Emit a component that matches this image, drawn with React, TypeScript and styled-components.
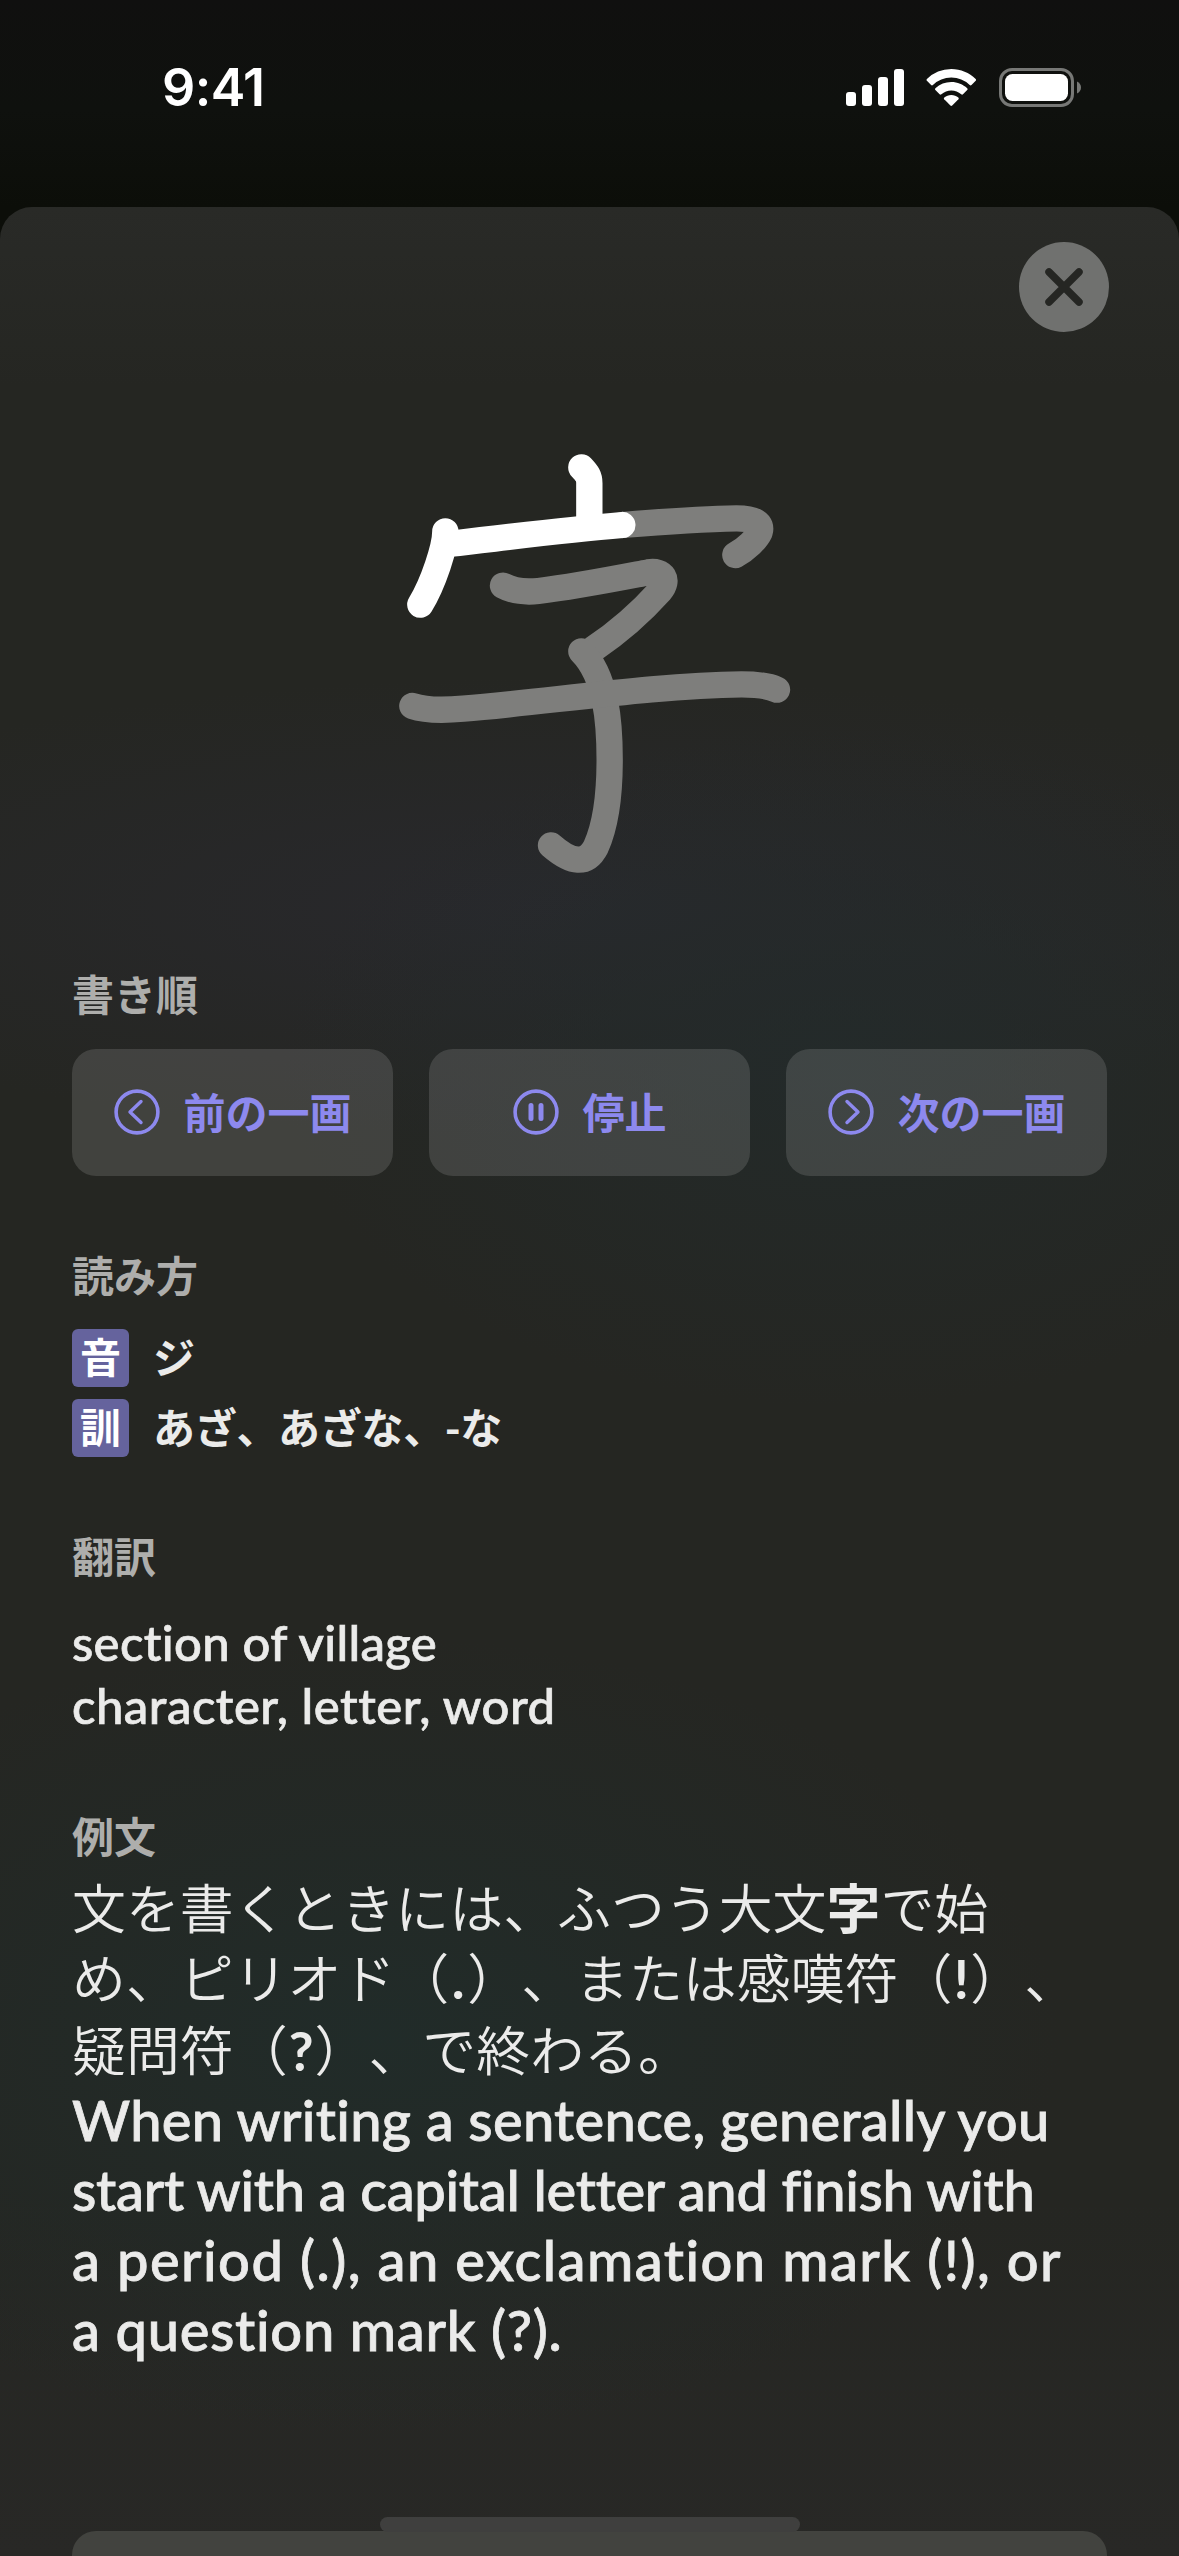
import React from "react";
import styled, { createGlobalStyle } from "styled-components";

const jp = `"Noto Sans CJK JP", sans-serif`;
const latin = `Futura, Lato, "Noto Sans CJK JP", sans-serif`;

const GlobalStyle = createGlobalStyle`
  * { box-sizing: border-box; }
  body { margin: 0; background: #0f100d; }
  h2, p { margin: 0; }
`;

const Screen = styled.div`
  width: 1179px;
  height: 2556px;
  overflow: hidden;
  display: flex;
  flex-direction: column;
  background: linear-gradient(#10100f 0, #0f110e 110px, #0c0e09 207px);
  position: relative;
  font-family: ${jp};
  text-spacing-trim: space-all;
`;

const StatusBar = styled.header`
  height: 207px;
  flex: none;
  display: flex;
  justify-content: space-between;
  align-items: flex-start;
  padding: 57px 98px 0 162px;
`;

const Time = styled.div`
  font: 600 52px/62px Inter, sans-serif;
  letter-spacing: -0.6px;
  color: #fff;
`;

const StatusIcons = styled.svg`
  display: block;
  width: 240px;
  height: 44px;
  margin-top: 9px;
`;

const Sheet = styled.main`
  flex: 1;
  min-height: 0;
  display: flex;
  flex-direction: column;
  border-radius: 32px 32px 0 0;
  padding: 35px 72px 0;
  background:
    radial-gradient(ellipse 680px 400px at 380px 1830px, rgba(32, 45, 43, 0.8), rgba(32, 45, 43, 0) 100%),
    radial-gradient(ellipse 560px 340px at 840px 860px, rgba(35, 43, 43, 0.85), rgba(35, 43, 43, 0) 100%),
    radial-gradient(ellipse 900px 230px at 560px 700px, rgba(41, 41, 46, 0.9), rgba(41, 41, 46, 0) 100%),
    linear-gradient(#292a27 0, #252622 180px, #252622 2000px, #282826 2349px);
`;

const SheetTop = styled.div`
  display: flex;
  justify-content: flex-end;
  height: 90px;
  margin-right: -2px;
`;

const CloseButton = styled.button`
  width: 90px;
  height: 90px;
  border: 0;
  padding: 0;
  border-radius: 50%;
  background: #70716f;
  svg { display: block; }
`;

const Kanji = styled.svg`
  display: block;
  width: 430px;
  height: 460px;
  margin: 98px 0 0 308px;
  flex: none;
`;

const Section = styled.section<{ $gap: number }>`
  display: flex;
  flex-direction: column;
  flex: none;
  margin-top: ${(p) => p.$gap}px;
`;

const Heading = styled.h2<{ $after: number }>`
  font: 700 42px/60px ${jp};
  color: #aeaeac;
  margin-bottom: ${(p) => p.$after}px;
`;

const ButtonRow = styled.div`
  display: grid;
  grid-template-columns: repeat(3, 1fr);
  gap: 36px;
`;

const StrokeButton = styled.button`
  height: 127px;
  border: 0;
  padding: 0 0 2px 1px;
  border-radius: 24px;
  display: flex;
  align-items: center;
  justify-content: center;
  gap: 23px;
  background: rgba(255, 255, 255, 0.13);
  color: #8d89ee;
  font: 700 42px/60px ${jp};
  svg { display: block; flex: none; }
`;

const ButtonLabel = styled.span`
  padding-bottom: 2px;
`;

const Reading = styled.div`
  display: flex;
  align-items: center;
  gap: 24px;
  height: 58px;
  & + & { margin-top: 12px; }
`;

const Tag = styled.span`
  width: 57px;
  height: 58px;
  border-radius: 6px;
  background: #65639d;
  color: #fff;
  font: 700 41px/53px ${jp};
  text-align: center;
`;

const Kana = styled.span`
  font: 700 42px/56px ${jp};
  letter-spacing: -0.3px;
  color: #ebebea;
  white-space: nowrap;
  padding-bottom: 4px;
`;

const Line = styled.span<{ $tracking: number }>`
  display: block;
  white-space: nowrap;
  letter-spacing: ${(p) => p.$tracking}px;
`;

const Translation = styled.p`
  font: 500 49px/63px ${latin};
  color: #ebebea;
  -webkit-text-stroke: 0.7px #ebebea;
`;

const Japanese = styled.p`
  font: 350 53.9px/70px ${jp};
  color: #ebebea;
  white-space: nowrap;
  b { font-weight: 700; }
`;

const Mark = styled.span<{ $w: number }>`
  display: inline-block;
  width: ${(p) => p.$w}px;
  text-align: center;
  font-family: ${latin};
  font-weight: 700;
`;

const English = styled.p`
  font: 500 56px/70px ${latin};
  color: #ebebea;
  -webkit-text-stroke: 0.8px #ebebea;
`;

const NextCard = styled.div`
  flex: none;
  height: 127px;
  border-radius: 24px;
  background: #42433f;
`;

const HomeIndicator = styled.div`
  position: absolute;
  left: 380px;
  top: 2517px;
  width: 420px;
  height: 15px;
  border-radius: 8px;
  background: #3f3f3e;
`;

const CircleIcon = ({ children }: { children: React.ReactNode }) => (
  <svg width="46" height="46" viewBox="0 0 46 46" fill="none" stroke="currentColor" strokeLinecap="round" strokeLinejoin="round">
    <circle cx="23" cy="23" r="20.9" strokeWidth="3.6" />
    {children}
  </svg>
);

const english: [string, number][] = [
  ["When writing a sentence, generally you", 0.27],
  ["start with a capital letter and finish with", -0.3],
  ["a period (.), an exclamation mark (!), or", 1.45],
  ["a question mark (?).", 0.7],
];

export default function App() {
  return (
    <Screen>
      <GlobalStyle />
      <StatusBar>
        <Time>9:41</Time>
        <StatusIcons viewBox="0 0 240 44">
          <g fill="#fff">
            <rect x="5" y="26" width="10" height="14" rx="3" />
            <rect x="21" y="19" width="10" height="21" rx="3" />
            <rect x="37" y="11" width="10" height="29" rx="3" />
            <rect x="53" y="3" width="10" height="37" rx="3" />
            <g transform="translate(-0.7 0)">
              <path d="M111 3c9.500 0 18 3.700 24.400 10 .5.500.5 1.300 0 1.800l-4.200 4.300c-.5.500-1.300.5-1.800 0A26.500 26.500 0 0 0 111 11.600a26.500 26.500 0 0 0-18.400 7.500c-.5.500-1.300.5-1.800 0l-4.200-4.300c-.5-.5-.5-1.300 0-1.800A34.800 34.800 0 0 1 111 3z" />
              <path d="M111 16c6.200 0 11.700 2.400 15.900 6.200.5.500.5 1.300 0 1.800l-4.200 4.300c-.5.500-1.200.5-1.800 0a14.800 14.800 0 0 0-19.800 0c-.6.500-1.300.5-1.800 0L95.100 24c-.5-.5-.5-1.300 0-1.800A23.600 23.600 0 0 1 111 16z" />
              <path d="M111 29c2.700 0 5.100 1 7 2.500.6.500.6 1.200.1 1.800l-6.200 6.300c-.5.500-1.300.5-1.800 0l-6.200-6.300c-.5-.6-.5-1.300.1-1.800 1.900-1.500 4.300-2.500 7-2.500z" />
            </g>
          </g>
          <rect x="159.500" y="3.500" width="72" height="36" rx="11.500" fill="none" stroke="#777876" strokeWidth="3" />
          <path d="M236 15.500v12c2.500-1 4-3.400 4-6s-1.500-5-4-6z" fill="#777876" />
          <rect x="164" y="8" width="63" height="27" rx="7.500" fill="#fff" />
        </StatusIcons>
      </StatusBar>
      <Sheet>
        <SheetTop>
          <CloseButton aria-label="閉じる">
            <svg width="90" height="90" viewBox="0 0 90 90" stroke="#252623" strokeWidth="7.500" strokeLinecap="round">
              <path d="M30 30l30 30M60 30L30 60" />
            </svg>
          </CloseButton>
        </SheetTop>
        <Kanji viewBox="0 0 1290 1380" fill="none" strokeWidth="79" strokeLinecap="round" strokeLinejoin="round">
          <g stroke="#7e7e7c">
            <path d="M727 285C850 275 960 267 1070 265C1125 265 1147 280 1139 306C1130 326 1100 357 1066 375" />
            <path d="M369 467C400 484 435 487 475 483C590 469 700 447 805 427C850 420 868 450 840 483C780 550 710 610 640 657" />
            <path d="M604 664C680 740 689 880 689 990C689 1100 675 1190 648 1250C620 1305 575 1300 513 1246" />
            <path d="M97 828C135 841 185 842 250 836C500 816 820 766 1085 763C1130 763 1162 766 1191 779" />
          </g>
          <g stroke="#fff">
            <path d="M604 112C622 131 628 140 628 160V285" />
            <path d="M196 304C196 350 160 460 121 524" />
            <path d="M212 341C380 322 550 300 727 285" />
          </g>
        </Kanji>
        <Section $gap={73}>
          <Heading $after={26}>書き順</Heading>
          <ButtonRow>
            <StrokeButton>
              <CircleIcon><path d="M27 12.500L16 23l11 10.500" strokeWidth="3.400" /></CircleIcon>
              <ButtonLabel>前の一画</ButtonLabel>
            </StrokeButton>
            <StrokeButton>
              <CircleIcon><path d="M18 16.500v13M28 16.500v13" strokeWidth="5" /></CircleIcon>
              <ButtonLabel>停止</ButtonLabel>
            </StrokeButton>
            <StrokeButton>
              <CircleIcon><path d="M19 12.500L30 23L19 33.500" strokeWidth="3.400" /></CircleIcon>
              <ButtonLabel>次の一画</ButtonLabel>
            </StrokeButton>
          </ButtonRow>
        </Section>
        <Section $gap={68}>
          <Heading $after={25}>読み方</Heading>
          <Reading><Tag>音</Tag><Kana>ジ</Kana></Reading>
          <Reading><Tag>訓</Tag><Kana>あざ、あざな、-な</Kana></Reading>
        </Section>
        <Section $gap={68}>
          <Heading $after={26}>翻訳</Heading>
          <Translation>
            <Line $tracking={0.32}>section of village</Line>
            <Line $tracking={0.5}>character, letter, word</Line>
          </Translation>
        </Section>
        <Section $gap={68}>
          <Heading $after={6}>例文</Heading>
          <Japanese lang="ja">
            文を書くときには、ふつう大文<b>字</b>で始<br />
            め、ピリオド（<Mark $w={18}>.</Mark>）、または感嘆符（<Mark $w={18}>!</Mark>）、<br />
            疑問符（<Mark $w={27}>?</Mark>）、で終わる。
          </Japanese>
          <English>
            {english.map(([text, tracking]) => (
              <Line key={text} $tracking={tracking}>{text}</Line>
            ))}
          </English>
        </Section>
        <Section $gap={166}>
          <NextCard />
        </Section>
      </Sheet>
      <HomeIndicator />
    </Screen>
  );
}
